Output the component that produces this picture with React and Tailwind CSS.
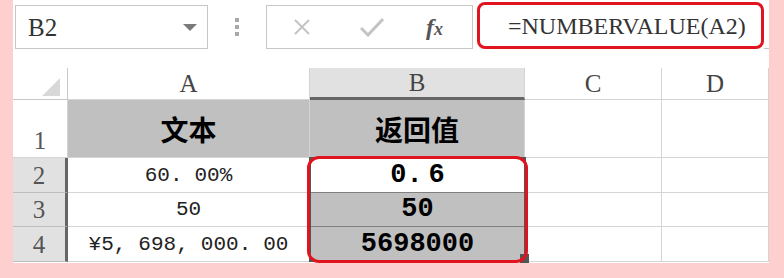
import React from 'react';

const mono = { fontFamily: '"Liberation Mono", "DejaVu Sans Mono", monospace' };
const serif = { fontFamily: '"Liberation Serif", "DejaVu Serif", serif' };
const cjk = { fontFamily: '"Noto Sans CJK SC", "Noto Sans", sans-serif' };

// full-width style punctuation: leave a gap after , and .
function Spaced({ text, gap }) {
  return text.split('').map((ch, i) =>
    ch === ',' || ch === '.' ? (
      <span key={i} className={gap}>{ch}</span>
    ) : (
      <span key={i}>{ch}</span>
    )
  );
}

function NameBox() {
  return (
    <div className="ml-[2px] flex h-[44px] w-[193px] items-center justify-between border border-[#c6c6c6] pl-[12px] pr-[10px]">
      <span className="text-[25px] leading-none text-[#333]" style={serif}>B2</span>
      <span className="h-0 w-0 border-x-[7px] border-t-[7px] border-x-transparent border-t-[#7a7a7a]" />
    </div>
  );
}

function Dots() {
  return (
    <div className="mx-[27px] flex h-[44px] w-[4px] flex-col justify-center gap-[3px]">
      <span className="h-[4px] w-[4px] bg-[#a8a8a8]" />
      <span className="h-[4px] w-[4px] bg-[#a8a8a8]" />
      <span className="h-[4px] w-[4px] bg-[#a8a8a8]" />
    </div>
  );
}

function FormulaButtons() {
  return (
    <div className="flex h-[44px] w-[207px] items-center border border-[#c6c6c6] pl-[25px]">
      <svg width="20" height="16" viewBox="0 0 20 16" className="shrink-0">
        <path d="M3 1 L17 15 M17 1 L3 15" stroke="#c4c4c4" strokeWidth="2" fill="none" />
      </svg>
      <svg width="24" height="20" viewBox="0 0 24 20" className="ml-[48px] shrink-0">
        <path d="M1 11 L8 18 L23 2" stroke="#c4c4c4" strokeWidth="3" fill="none" />
      </svg>
      <span className="ml-[42px] font-semibold italic leading-none text-[#555]" style={serif}>
        <span className="text-[24px]">f</span>
        <span className="text-[18px]">x</span>
      </span>
    </div>
  );
}

function FormulaInput() {
  return (
    <div className="ml-[4px] flex h-[47px] w-[287px] items-center rounded-[8px] border-[3px] border-[#e0141e] pl-[28px]">
      <span className="text-[24px] leading-none text-[#333]" style={serif}>=NUMBERVALUE(A2)</span>
    </div>
  );
}

const colHead = 'flex items-center justify-center border-r border-b border-[#d4d4d4] bg-white text-[25px] leading-none text-[#444]';
const rowHead = 'flex items-center justify-center border-b border-[#bdbdbd] bg-[#e1e1e1] text-[25px] leading-none text-[#555] border-r-[3px] border-r-[#666]';
const cell = 'flex items-center justify-center border-r border-b border-[#d4d4d4] bg-white text-[21px] leading-none text-[#222]';
const valueCell = 'flex items-center justify-center border-b border-[#808080] text-[27px] font-bold leading-none text-black';

export default function App() {
  const rows = [
    { n: '2', text: '60.00%', value: '0.6', fill: 'bg-white' },
    { n: '3', text: '50', value: '50', fill: 'bg-[#c0c0c0]' },
    { n: '4', text: '¥5,698,000.00', value: '5698000', fill: 'bg-[#c0c0c0]' },
  ];

  return (
    <div className="h-[278px] w-[784px] bg-[#fdcfcf] pl-[13px]">
      <div className="flex h-[263px] w-[756px] flex-col bg-white">
        {/* name box + formula bar */}
        <div className="flex h-[49px] items-end">
          <NameBox />
          <Dots />
          <FormulaButtons />
          <FormulaInput />
          <div className="h-px flex-1 bg-[#c6c6c6]" />
        </div>

        {/* sheet */}
        <div className="relative mt-[19px] grid grid-cols-[55px_242px_215px_137px_107px] grid-rows-[32px_58px_35px_34px_35px]" style={serif}>
          <div className="flex items-end justify-end border-r border-b border-[#c8c8c8] bg-white p-[3px]">
            <span className="mr-[4px] h-0 w-0 border-b-[18px] border-l-[18px] border-b-[#d8d8d8] border-l-transparent" />
          </div>
          <div className={colHead}>A</div>
          <div className="flex items-center justify-center border-r border-[#d4d4d4] border-b-[3px] border-b-[#666] bg-[#e1e1e1] text-[25px] leading-none text-[#444]">B</div>
          <div className={colHead}>C</div>
          <div className={colHead}>D</div>

          <div className="flex items-end justify-center border-r border-b border-[#d4d4d4] bg-white pb-[4px] text-[25px] leading-none text-[#555]">1</div>
          <div className="flex items-center justify-center border-r border-b border-[#d4d4d4] bg-[#c0c0c0] text-[28px] font-bold text-black" style={cjk}>文本</div>
          <div className="flex items-center justify-center border-r border-b border-[#d4d4d4] bg-[#c0c0c0] text-[28px] font-bold text-black" style={cjk}>返回值</div>
          <div className={cell} />
          <div className={cell} />

          {rows.map((r) => (
            <React.Fragment key={r.n}>
              <div className={rowHead}>{r.n}</div>
              <div className={cell} style={mono}>
                <Spaced text={r.text} gap="mr-[12px]" />
              </div>
              <div className={`${valueCell} ${r.fill}`} style={mono}>
                <Spaced text={r.value} gap="mr-[6px]" />
              </div>
              <div className={cell} />
              <div className={cell} />
            </React.Fragment>
          ))}

          {/* active selection outline with fill handle */}
          <div className="pointer-events-none absolute left-[296px] top-[89px] h-[105px] w-[217px] border-2 border-[#555]" />
          <div className="pointer-events-none absolute left-[507px] top-[186px] h-[9px] w-[9px] bg-[#555]" />
          {/* highlight around B2:B4 */}
          <div className="pointer-events-none absolute left-[294px] top-[88px] h-[107px] w-[221px] rounded-[12px] border-[3px] border-[#e0141e]" />
        </div>
      </div>
    </div>
  );
}
